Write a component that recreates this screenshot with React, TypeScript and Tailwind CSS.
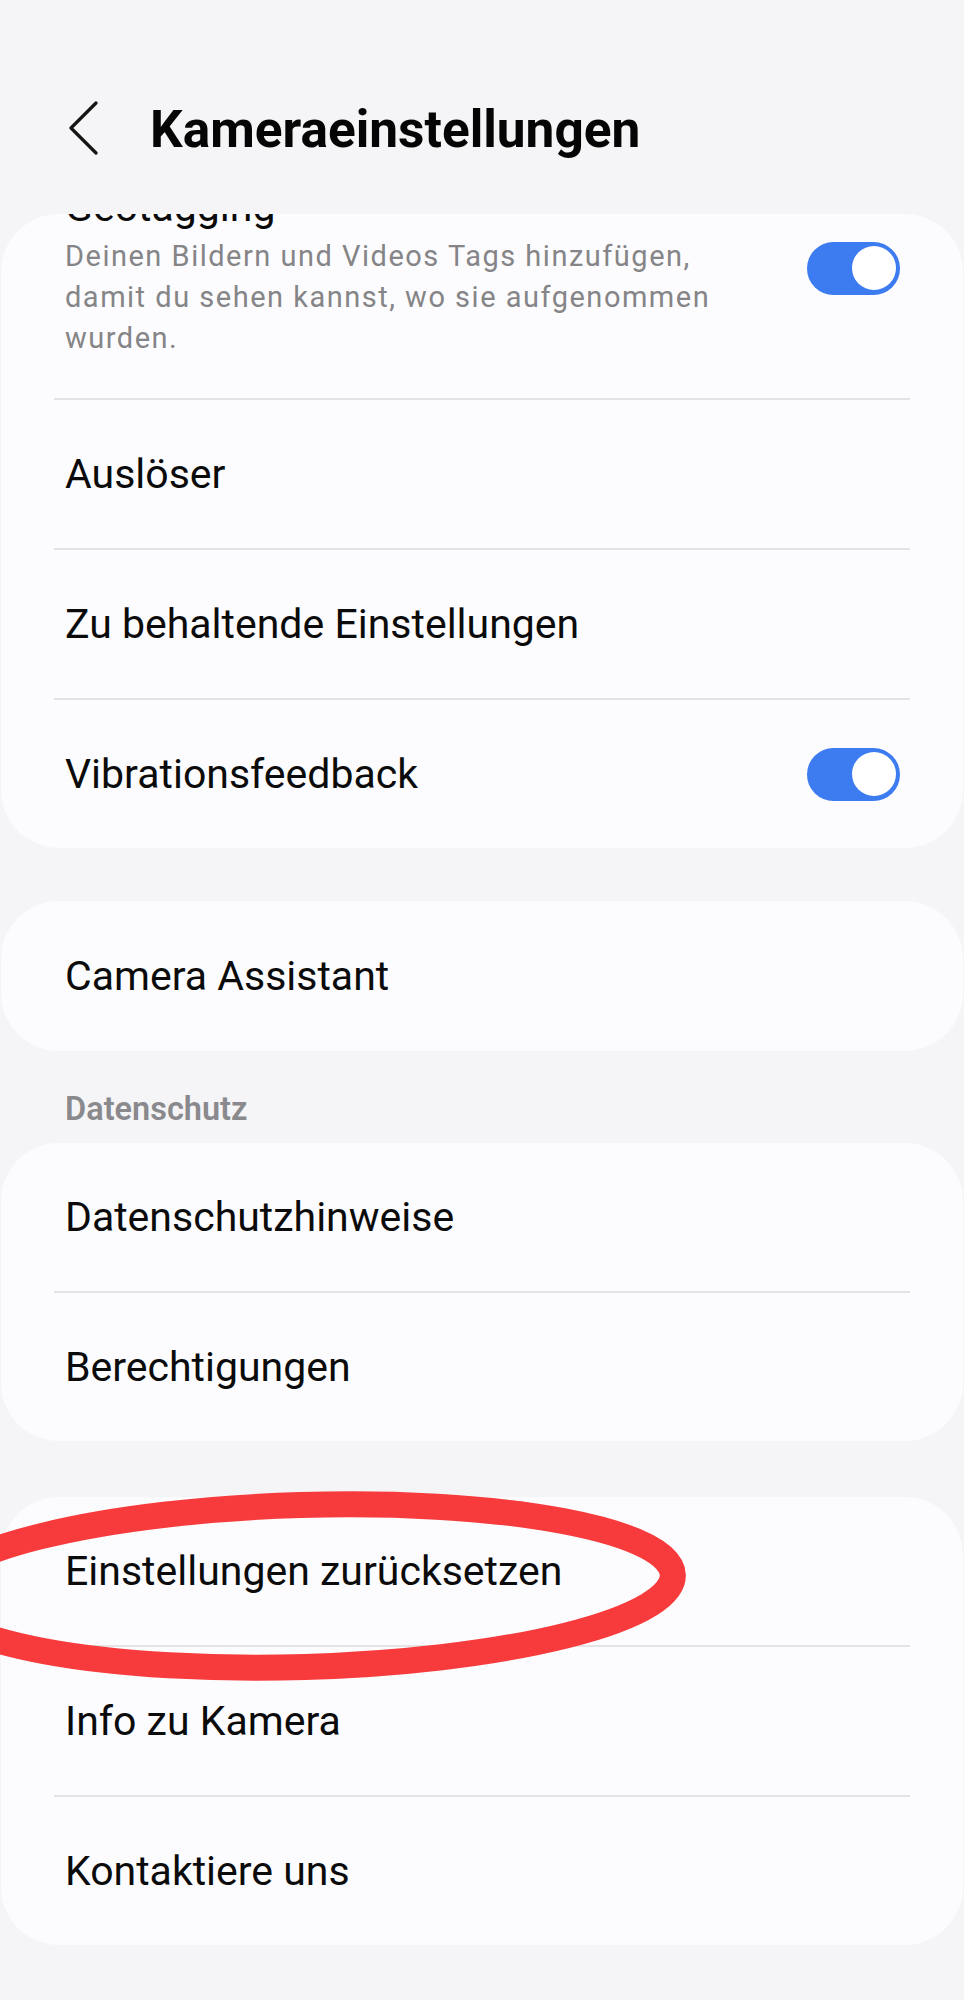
import React from "react";

// Blue switch, always on in this screen
const Toggle = () => {
  return (
    <div className="flex items-center justify-end w-[93px] h-[53px] rounded-full bg-[#3d7bf0] pr-[4px] shrink-0">
      <div className="w-[44px] h-[44px] rounded-full bg-white" />
    </div>
  );
};

const Divider = () => <div className="h-[2px] mx-[53px] bg-[#e4e4e6]" />;

const Row = ({ label, toggle }: { label: string; toggle?: boolean }) => {
  return (
    <div className="flex items-center justify-between h-[148px] pl-[64px] pr-[63px]">
      <span className="text-[41px] leading-[48px] text-[#0b0b0b]">{label}</span>
      {toggle && <Toggle />}
    </div>
  );
};

const Card = ({ children, className = "" }: { children: React.ReactNode; className?: string }) => {
  return <div className={"mx-px rounded-[58px] bg-[#fcfcfe] overflow-hidden " + className}>{children}</div>;
};

export default function App() {
  return (
    <div
      className="relative w-[964px] min-h-[2000px] bg-[#f5f5f7] overflow-hidden"
      style={{ fontFamily: "Roboto, 'Noto Sans', sans-serif" }}
    >
      {/* Header */}
      <div className="flex items-start h-[214px] pt-[101px] pl-[68px]">
        <svg width="30" height="54" viewBox="0 0 30 54" className="shrink-0">
          <path d="M28 2 L3 27 L28 52" fill="none" stroke="#151515" strokeWidth="3.2" strokeLinecap="round" strokeLinejoin="round" />
        </svg>
        <h1 className="ml-[52px] -mt-[1px] text-[51.4px] leading-[60px] font-bold text-[#050505]">
          Kameraeinstellungen
        </h1>
      </div>

      {/* Card 1, scrolled so the first row is cut at the top */}
      <Card>
        <div className="flex items-center justify-between h-[260px] -mt-[76px] pl-[64px] pr-[63px]">
          <div className="self-start mt-[45px]">
            <div className="text-[41px] leading-[48px] text-[#0b0b0b]">Geotagging</div>
            <p className="mt-[5px] text-[29px] leading-[41px] tracking-[1.5px] text-[#858587]">
              Deinen Bildern und Videos Tags hinzufügen,
              <br />
              damit du sehen kannst, wo sie aufgenommen
              <br />
              wurden.
            </p>
          </div>
          <Toggle />
        </div>
        <Divider />
        <Row label="Auslöser" />
        <Divider />
        <Row label="Zu behaltende Einstellungen" />
        <Divider />
        <Row label="Vibrationsfeedback" toggle />
      </Card>

      <Card className="mt-[53px]">
        <div className="flex items-center h-[150px] pl-[64px]">
          <span className="text-[41px] leading-[48px] text-[#0b0b0b]">Camera Assistant</span>
        </div>
      </Card>

      <div className="mt-[38px] mb-[14px] pl-[65px] text-[32.5px] leading-[40px] font-semibold text-[#8a8a8e]">
        Datenschutz
      </div>

      <Card>
        <Row label="Datenschutzhinweise" />
        <Divider />
        <Row label="Berechtigungen" />
      </Card>

      <Card className="mt-[56px]">
        <Row label="Einstellungen zurücksetzen" />
        <Divider />
        <Row label="Info zu Kamera" />
        <Divider />
        <Row label="Kontaktiere uns" />
      </Card>

      {/* red hand-drawn marker round the reset row */}
      <svg className="absolute left-0 top-[1480px] pointer-events-none" width="720" height="210" viewBox="0 0 720 210">
        <ellipse
          cx="303"
          cy="106"
          rx="370"
          ry="81"
          fill="none"
          stroke="#f73a3b"
          strokeWidth="26"
          transform="rotate(-1.7 303 106)"
        />
      </svg>
    </div>
  );
}
